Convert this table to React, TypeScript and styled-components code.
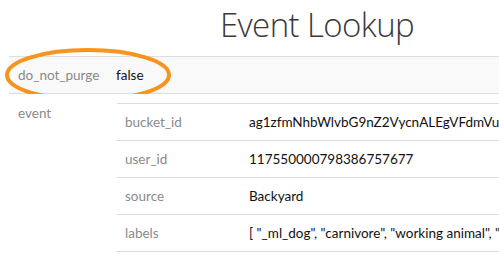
import styled, { createGlobalStyle } from "styled-components";

const GlobalStyle = createGlobalStyle`
  html, body {
    margin: 0;
    padding: 0;
    background: #ffffff;
    overflow: hidden;
  }
  body {
    font-family: Lato, "Open Sans", sans-serif;
  }
`;

type Field = { name: string; value: string };

const eventFields: Field[] = [
  { name: "bucket_id", value: "ag1zfmNhbWlvbG9nZ2VycnALEgVFdmVudCIxMjM0NTY3ODkw" },
  { name: "user_id", value: "117550000798386757677" },
  { name: "source", value: "Backyard" },
  {
    name: "labels",
    value: '[ "_ml_dog", "carnivore", "working animal", "dog breed" ]',
  },
];

function App() {
  return (
    <>
      <GlobalStyle />
      <Page>
        <Title>Event Lookup</Title>
        <Table>
          <Row $shaded>
            <Key>do_not_purge</Key>
            <Value>false</Value>
            <Highlight viewBox="0 0 170 56" aria-hidden>
              <ellipse cx="85" cy="28" rx="81" ry="25" />
            </Highlight>
          </Row>
          <Row>
            <Key $top>event</Key>
            <NestedCell>
              <NestedTable>
                {eventFields.map((f) => (
                  <NestedRow key={f.name}>
                    <NestedKey>{f.name}</NestedKey>
                    <NestedValue>{f.value}</NestedValue>
                  </NestedRow>
                ))}
              </NestedTable>
            </NestedCell>
          </Row>
        </Table>
      </Page>
    </>
  );
}

export default App;

const Page = styled.div`
  width: 616px;
  padding: 0 9px;
`;

const Title = styled.h1`
  margin: 0;
  height: 56px;
  padding-top: 4px;
  box-sizing: border-box;
  text-align: center;
  font-family: "Open Sans", sans-serif;
  font-weight: 300;
  font-size: 33px;
  letter-spacing: -0.6px;
  line-height: 42px;
  color: #3a3a3a;
`;

const Table = styled.div`
  display: flex;
  flex-direction: column;
  border-top: 1px solid #dddddd;
`;

const Row = styled.div<{ $shaded?: boolean }>`
  position: relative;
  display: flex;
  align-items: flex-start;
  background: ${({ $shaded }) => ($shaded ? "#f9f9f9" : "#ffffff")};
  border-bottom: 1px solid #dddddd;
`;

const Key = styled.div<{ $top?: boolean }>`
  width: 107px;
  flex: none;
  padding: ${({ $top }) => ($top ? "11px 0 0 9px" : "10px 0 10px 9px")};
  box-sizing: border-box;
  font-size: 13.5px;
  line-height: 16px;
  color: #8a8a8a;
`;

const Value = styled.div`
  padding: 10px 0;
  font-size: 13.5px;
  line-height: 16px;
  color: #111111;
  white-space: nowrap;
`;

const NestedCell = styled.div`
  flex: 1;
  min-width: 0;
  padding: 9px 0 5px 1px;
`;

const NestedTable = styled.div`
  display: flex;
  flex-direction: column;
  border-top: 1px solid #dddddd;
`;

const NestedRow = styled.div`
  display: flex;
  align-items: center;
  height: 37px;
  box-sizing: border-box;
  border-bottom: 1px solid #dddddd;
`;

const NestedKey = styled.div`
  width: 132px;
  flex: none;
  padding-left: 8px;
  box-sizing: border-box;
  font-size: 13.5px;
  color: #8a8a8a;
`;

const NestedValue = styled.div`
  font-size: 13.5px;
  color: #111111;
  white-space: nowrap;
`;

const Highlight = styled.svg`
  position: absolute;
  left: -6px;
  top: -10px;
  width: 170px;
  height: 56px;
  overflow: visible;
  pointer-events: none;

  ellipse {
    fill: none;
    stroke: #f7941d;
    stroke-width: 4;
  }
`;
